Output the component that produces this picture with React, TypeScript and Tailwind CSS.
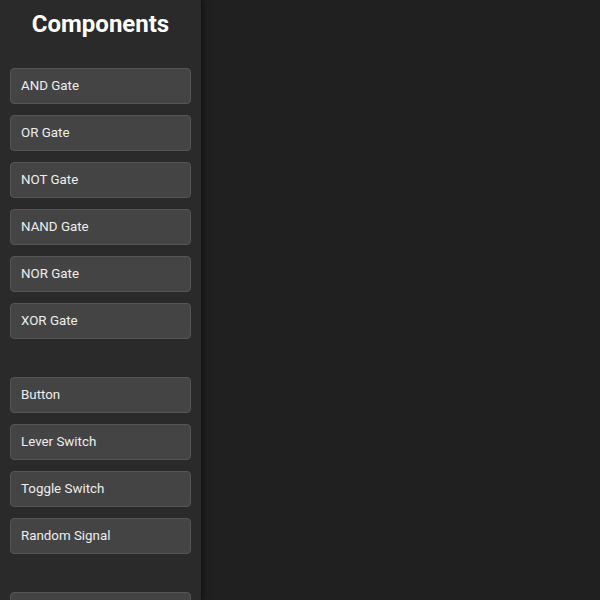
import React from 'react';

const GROUPS: string[][] = [
  ['AND Gate', 'OR Gate', 'NOT Gate', 'NAND Gate', 'NOR Gate', 'XOR Gate'],
  ['Button', 'Lever Switch', 'Toggle Switch', 'Random Signal'],
  ['Light Bulb', 'Display', 'Buzzer'],
];

export default function App() {
  return (
    <div className="flex h-screen w-full overflow-hidden bg-[#202020] font-['Roboto',sans-serif]">
      <aside className="relative z-10 flex w-[201px] shrink-0 flex-col overflow-hidden bg-[#2a2a2a] px-[10px] shadow-[2px_0_6px_rgba(0,0,0,0.55)]">
        <h2 className="mt-[8px] mb-[28px] text-center text-[24px] leading-[32px] font-bold text-white">Components</h2>
        <div className="flex flex-col gap-[38px]">
          {GROUPS.map((group, gi) => (
            <div key={gi} className="flex flex-col gap-[11px]">
              {group.map(name => (
                <button
                  key={name}
                  className="h-[36px] shrink-0 rounded-[4px] border border-[#555] bg-[#444] px-[10px] text-left text-[13.33px] text-[#eee]"
                >
                  {name}
                </button>
              ))}
            </div>
          ))}
        </div>
      </aside>
      <main className="flex-1" />
    </div>
  );
}
